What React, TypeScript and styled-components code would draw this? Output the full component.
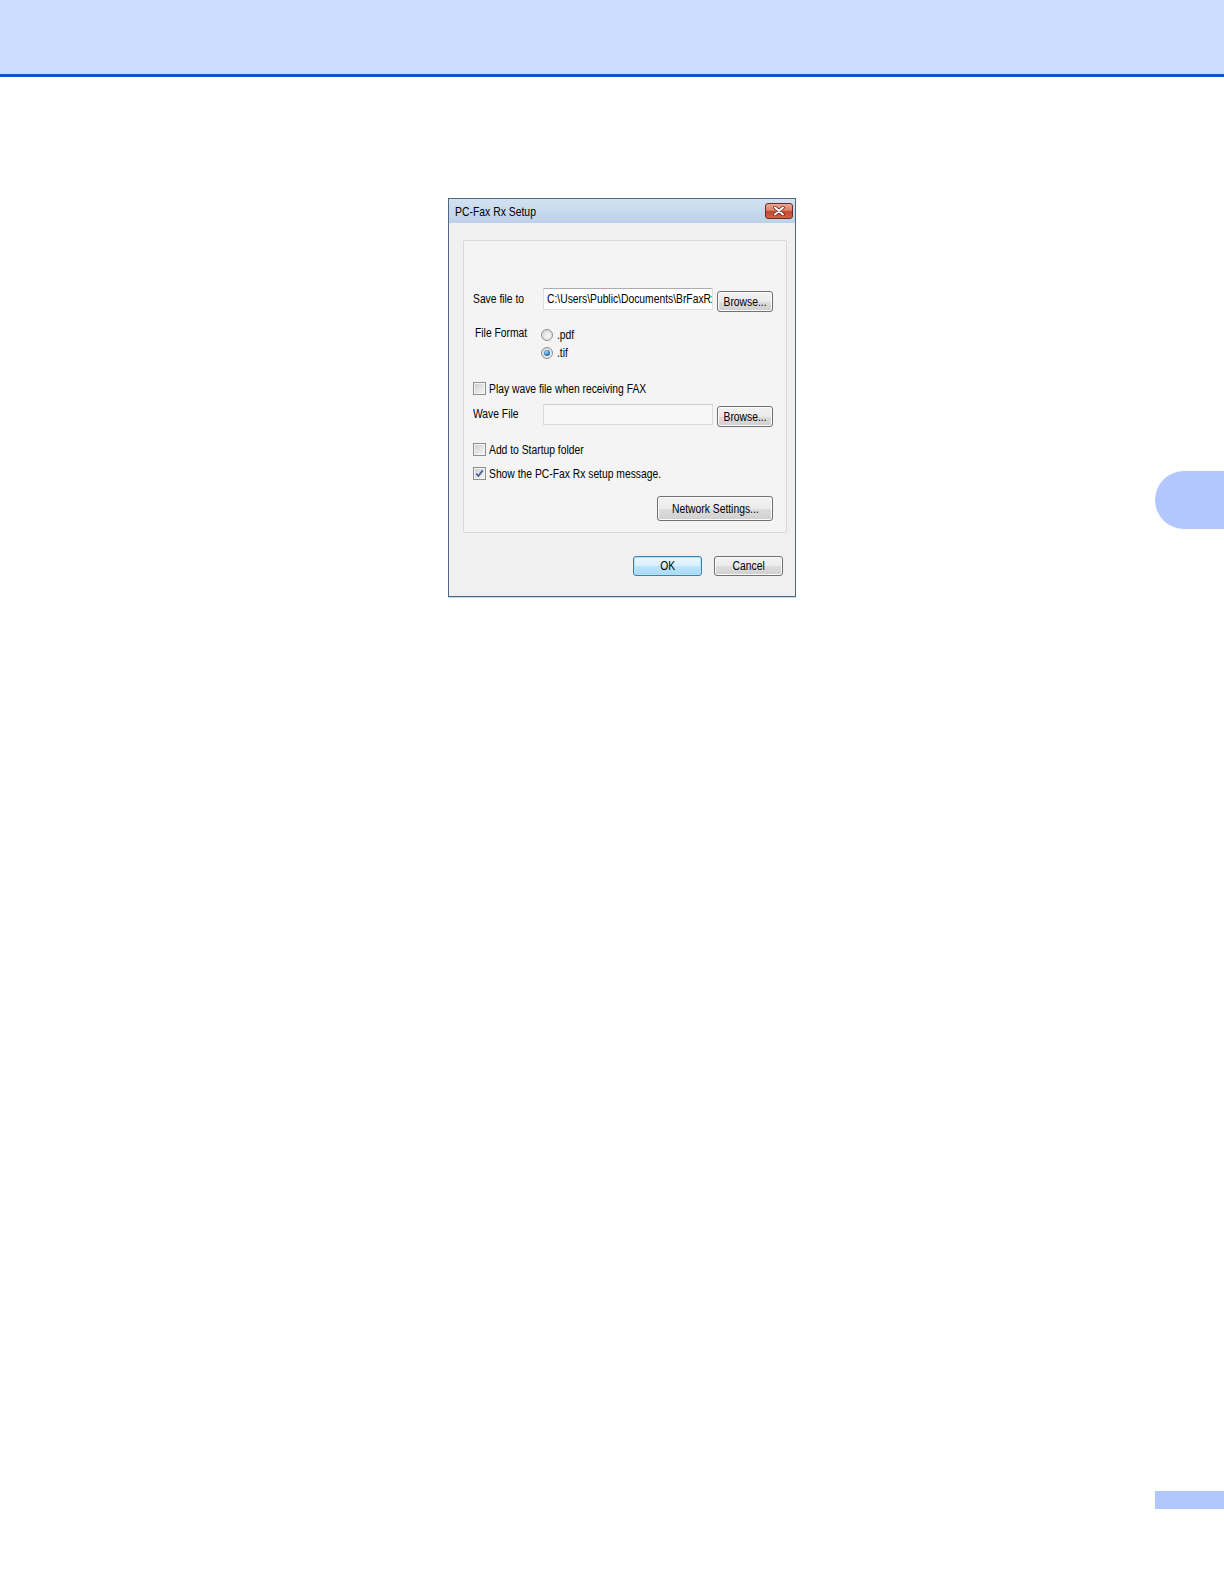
import React from 'react';
import styled, { createGlobalStyle } from 'styled-components';

const GlobalStyle = createGlobalStyle`
  body {
    margin: 0;
    background: #ffffff;
    font-family: "Liberation Sans", Arial, sans-serif;
    color: #000;
  }
`;

const Page = styled.div`
  width: 1224px;
  min-height: 1584px;
  display: flex;
  flex-direction: column;
`;

const Header = styled.header`
  height: 74px;
  background: #ccdcff;
  border-bottom: 3px solid #1a4fd0;
`;

const Main = styled.main`
  flex: 1;
  display: flex;
`;

const Content = styled.div`
  flex: 1;
  padding: 121px 0 0 448px;
`;

const Margin = styled.aside`
  width: 69px;
  padding-top: 394px;
`;

const ChapterTab = styled.div`
  height: 58px;
  background: #b3c7ff;
  border-radius: 29px 0 0 29px;
`;

const Footer = styled.footer`
  display: flex;
  justify-content: flex-end;
  padding-bottom: 75px;
`;

const PageBox = styled.div`
  width: 69px;
  height: 18px;
  background: #b3c7ff;
`;

/* the screenshot's UI font is a narrow one, so text is squeezed horizontally */
const Text = styled.span<{ $origin?: string; $squeeze?: number }>`
  display: inline-block;
  white-space: nowrap;
  transform: scaleX(${(p) => p.$squeeze ?? 0.86});
  transform-origin: ${(p) => p.$origin ?? 'left center'};
`;

/* dialog */

const Dialog = styled.div`
  width: 348px;
  box-sizing: border-box;
  border: 1px solid #4f6784;
  box-shadow: 0 1px 0 #c4d8ee;
  font-size: 12px;
`;

const TitleBar = styled.div`
  height: 24px;
  display: flex;
  align-items: center;
  justify-content: space-between;
  padding: 0 2px 0 6px;
  background: linear-gradient(#d3e2f2, #bcd1e8);
`;

const Title = styled(Text)`
  font-size: 13px;
  color: #000;
`;

const CloseButton = styled.div`
  width: 28px;
  height: 16px;
  box-sizing: border-box;
  border: 1px solid #6b2b22;
  border-radius: 3px;
  background: linear-gradient(#eaa794 0%, #d98169 45%, #c2452c 55%, #d1664a 100%);
  display: flex;
  align-items: center;
  justify-content: center;
`;

const Body = styled.div`
  background: #f0f0f0;
  padding: 17px 8px 20px 14px;
`;

const Panel = styled.div`
  height: 293px;
  box-sizing: border-box;
  border: 1px solid #d9d9d9;
  border-radius: 2px;
  background: #f4f4f4;
  padding-left: 9px;
  display: flex;
  flex-direction: column;
`;

const Row = styled.div<{ $top: number; $indent?: number }>`
  display: flex;
  align-items: flex-start;
  margin-top: ${(p) => p.$top}px;
  padding-left: ${(p) => p.$indent ?? 0}px;
`;

const Label = styled.span<{ $width: number; $height?: number; $shift?: number }>`
  width: ${(p) => p.$width}px;
  height: ${(p) => p.$height ?? 22}px;
  line-height: ${(p) => p.$height ?? 22}px;
  margin-top: ${(p) => p.$shift ?? 0}px;
  white-space: nowrap;
`;

const Field = styled.div<{ $disabled?: boolean }>`
  width: 170px;
  height: ${(p) => (p.$disabled ? 21 : 22)}px;
  line-height: ${(p) => (p.$disabled ? 19 : 20)}px;
  box-sizing: border-box;
  padding-left: 3px;
  overflow: hidden;
  background: ${(p) => (p.$disabled ? '#f6f6f6' : '#ffffff')};
  border: 1px solid ${(p) => (p.$disabled ? '#dadada' : '#dbdfe6')};
  border-top-color: ${(p) => (p.$disabled ? '#cfcfcf' : '#abadb3')};
`;

const Button = styled.div<{ $w: number; $h: number; $top?: number; $left?: number; $default?: boolean }>`
  width: ${(p) => p.$w}px;
  height: ${(p) => p.$h}px;
  margin-top: ${(p) => p.$top ?? 0}px;
  margin-left: ${(p) => p.$left ?? 0}px;
  box-sizing: border-box;
  border: 1px solid ${(p) => (p.$default ? '#3c7fb1' : '#707070')};
  border-radius: 3px;
  background: ${(p) =>
    p.$default
      ? 'linear-gradient(#eaf6fd 0%, #d9f0fc 50%, #bee6fd 51%, #a7d9f5 100%)'
      : 'linear-gradient(#f2f2f2 0%, #ebebeb 50%, #dddddd 51%, #cfcfcf 100%)'};
  box-shadow: inset 0 0 0 1px ${(p) => (p.$default ? '#b5e2f8' : '#fbfbfb')};
  display: flex;
  align-items: center;
  justify-content: center;
  font-size: 12px;
`;

const RadioList = styled.div`
  display: flex;
  flex-direction: column;
  gap: 6px;
`;

const Option = styled.label`
  display: flex;
  align-items: center;
  height: 12px;
  gap: 4px;
`;

const Radio = styled.span<{ $on?: boolean }>`
  width: 12px;
  height: 12px;
  box-sizing: border-box;
  border-radius: 50%;
  border: 1px solid #8e8f8f;
  background: radial-gradient(circle at 60% 60%, #f7f7f7 0%, #dcdcdc 70%, #c9c9c9 100%);
  display: flex;
  align-items: center;
  justify-content: center;

  &::after {
    content: '';
    display: ${(p) => (p.$on ? 'block' : 'none')};
    width: 6px;
    height: 6px;
    border-radius: 50%;
    background: radial-gradient(circle at 40% 35%, #b4e3fb 0%, #3a8bd0 45%, #123d7a 100%);
  }
`;

const CheckRow = styled.label`
  display: flex;
  align-items: center;
  height: 13px;
  gap: 3px;
`;

const Box = styled.span`
  width: 13px;
  height: 13px;
  box-sizing: border-box;
  border: 1px solid #8e8f8f;
  background: linear-gradient(135deg, #c7cbd1 0%, #e3e3e3 50%, #f7f7f7 100%);
  box-shadow: inset 0 0 0 1px #f4f4f4;
  display: flex;
  align-items: center;
  justify-content: center;
`;

const Actions = styled.div<{ $top: number; $right: number; $gap?: number }>`
  display: flex;
  justify-content: flex-end;
  gap: ${(p) => p.$gap ?? 0}px;
  margin-top: ${(p) => p.$top}px;
  padding-right: ${(p) => p.$right}px;
`;

const Check = ({ on, children }: { on?: boolean; children: React.ReactNode }) => (
  <CheckRow>
    <Box>
      {on && (
        <svg width="9" height="9" viewBox="0 0 9 9">
          <path d="M1.3 4.6 L3.4 7 L7.8 1.4" fill="none" stroke="#4c5c9c" strokeWidth="1.7" />
        </svg>
      )}
    </Box>
    <Text>{children}</Text>
  </CheckRow>
);

const Push = ({ children, ...rest }: React.ComponentProps<typeof Button>) => (
  <Button {...rest}>
    <Text $origin="center">{children}</Text>
  </Button>
);

const App = () => (
  <>
    <GlobalStyle />
    <Page>
      <Header />
      <Main>
        <Content>
          <Dialog>
            <TitleBar>
              <Title $squeeze={0.8}>PC-Fax Rx Setup</Title>
              <CloseButton>
                <svg width="12" height="10" viewBox="0 0 12 10">
                  <path d="M2 1.5 L10 8.5 M10 1.5 L2 8.5" stroke="#5a1f17" strokeWidth="3.4" strokeLinecap="round" />
                  <path d="M2 1.5 L10 8.5 M10 1.5 L2 8.5" stroke="#ffffff" strokeWidth="2" strokeLinecap="round" />
                </svg>
              </CloseButton>
            </TitleBar>
            <Body>
              <Panel>
                <Row $top={47}>
                  <Label $width={70}><Text>Save file to</Text></Label>
                  <Field><Text>{'C:\\Users\\Public\\Documents\\BrFaxRx'}</Text></Field>
                  <Push $w={56} $h={21} $top={3} $left={4}>Browse...</Push>
                </Row>
                <Row $top={17} $indent={2}>
                  <Label $width={66} $height={12} $shift={-2}><Text>File Format</Text></Label>
                  <RadioList>
                    <Option>
                      <Radio />
                      <Text>.pdf</Text>
                    </Option>
                    <Option>
                      <Radio $on />
                      <Text>.tif</Text>
                    </Option>
                  </RadioList>
                </Row>
                <Row $top={23}>
                  <Check>Play wave file when receiving FAX</Check>
                </Row>
                <Row $top={9}>
                  <Label $width={70} $height={21}><Text>Wave File</Text></Label>
                  <Field $disabled />
                  <Push $w={56} $h={21} $top={2} $left={4}>Browse...</Push>
                </Row>
                <Row $top={16}>
                  <Check>Add to Startup folder</Check>
                </Row>
                <Row $top={11}>
                  <Check on>Show the PC-Fax Rx setup message.</Check>
                </Row>
                <Actions $top={16} $right={13}>
                  <Push $w={116} $h={25}>Network Settings...</Push>
                </Actions>
              </Panel>
              <Actions $top={23} $right={4} $gap={12}>
                <Push $w={69} $h={20} $default>OK</Push>
                <Push $w={69} $h={20}>Cancel</Push>
              </Actions>
            </Body>
          </Dialog>
        </Content>
        <Margin>
          <ChapterTab />
        </Margin>
      </Main>
      <Footer>
        <PageBox />
      </Footer>
    </Page>
  </>
);

export default App;
